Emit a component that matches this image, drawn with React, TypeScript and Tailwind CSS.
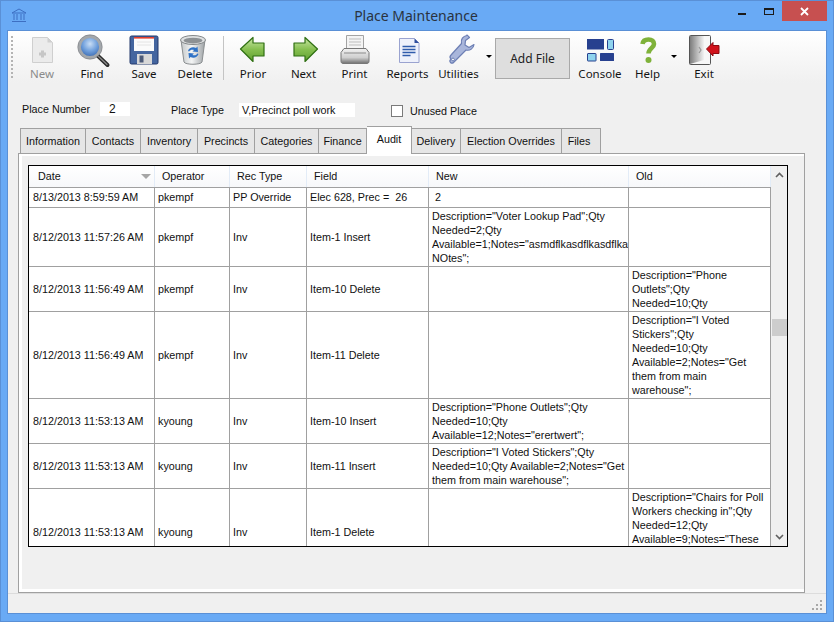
import type { ReactNode } from "react";

const uiFont = { fontFamily: '"Liberation Sans", Arial, sans-serif' };
const barFont = { fontFamily: '"Noto Sans", "Open Sans", sans-serif' };

// icons are all on a 32x32 box, drawn to sit where the toolbar puts them
function Ico({ children }: { children: ReactNode }) {
  return (
    <svg width="32" height="32" viewBox="0 0 32 32" className="overflow-visible shrink-0">
      {children}
    </svg>
  );
}

function NewIcon() {
  return (
    <Ico>
      <path d="M6.500 3.500h15l5 5v20h-20z" fill="#ebebeb" stroke="#cfcfcf" />
      <path d="M21.500 3.500v5h5z" fill="#d0d0d0" />
      <path d="M13 20h7M16.500 16.500v7" stroke="#c6c6c6" strokeWidth="3" />
    </Ico>
  );
}

function FindIcon() {
  return (
    <Ico>
      <defs>
        <radialGradient id="glass" cx="50%" cy="35%" r="70%">
          <stop offset="0" stopColor="#c9def6" />
          <stop offset="0.5" stopColor="#6f9fdc" />
          <stop offset="1" stopColor="#2f5fa8" />
        </radialGradient>
      </defs>
      <path d="M21 21l10.500 10" stroke="#2b2b2b" strokeWidth="4" strokeLinecap="round" />
      <path d="M21 21l10 9.500" stroke="#8d8d8d" strokeWidth="1.200" strokeLinecap="round" />
      <circle cx="14" cy="13" r="10.500" fill="url(#glass)" stroke="#a3a7ab" strokeWidth="2.800" />
      <circle cx="14" cy="13" r="12.200" fill="none" stroke="#5c6066" strokeWidth="0.600" />
    </Ico>
  );
}

function SaveIcon() {
  return (
    <Ico>
      <rect x="2" y="2" width="28" height="28" rx="1.500" fill="#44659f" stroke="#22386b" />
      <rect x="6" y="3" width="20" height="14" fill="#fbfbfb" />
      <rect x="6" y="3" width="20" height="1.600" fill="#e2402e" />
      <path d="M9 8h14M9 11h14" stroke="#e4e4e4" />
      <rect x="9" y="20" width="15" height="10" fill="#d8d8d8" />
      <rect x="11.500" y="21.500" width="4" height="7" fill="#4c5a78" />
    </Ico>
  );
}

function DeleteIcon() {
  return (
    <Ico>
      <defs>
        <linearGradient id="bin" x1="0" x2="1" y1="0" y2="0">
          <stop offset="0" stopColor="#c4c8ca" />
          <stop offset="0.45" stopColor="#f4f5f5" />
          <stop offset="1" stopColor="#9da2a5" />
        </linearGradient>
      </defs>
      <path d="M2 6l3 22c1 3 17 3 18 0l3-22z" fill="url(#bin)" stroke="#8a8e90" />
      <ellipse cx="14" cy="6" rx="12.500" ry="4.500" fill="#dfe1e2" stroke="#84888a" />
      <ellipse cx="14" cy="6.600" rx="9.500" ry="2.800" fill="#8d9194" />
      <path d="M9 17c1-3.500 5-4.500 8-3l1.500-1.500.5 5.500-5.500-.5 1.600-1.500c-2-.8-4-.3-5 1.500z" fill="#2f72c6" />
      <path d="M19.500 20c-1 3.500-5 4.500-8 3L10 24.500 9.500 19l5.500.5-1.600 1.500c2 .8 4 .3 5-1.500z" fill="#2f72c6" />
    </Ico>
  );
}

function ArrowIcon({ id, flip }: { id: string; flip?: boolean }) {
  return (
    <Ico>
      <defs>
        <linearGradient id={id} x1="0" x2="0" y1="0" y2="1">
          <stop offset="0" stopColor="#c9e6a6" />
          <stop offset="0.5" stopColor="#86bf50" />
          <stop offset="1" stopColor="#5fa030" />
        </linearGradient>
      </defs>
      <g transform={flip ? "translate(33 0) scale(-1 1)" : undefined}>
        <path
          d="M3.500 15L16 3.500v5.500h11v13H16v5.500z"
          fill={`url(#${id})`}
          stroke="#2f6f12"
          strokeWidth="1.200"
          strokeLinejoin="round"
        />
      </g>
    </Ico>
  );
}

function PrintIcon() {
  return (
    <Ico>
      <defs>
        <linearGradient id="printer" x1="0" x2="0" y1="0" y2="1">
          <stop offset="0" stopColor="#f2f2f2" />
          <stop offset="0.6" stopColor="#cfcfcf" />
          <stop offset="1" stopColor="#6f6f6f" />
        </linearGradient>
      </defs>
      <path d="M7.500 1.500h17v13h-17z" fill="#f4f4f4" stroke="#a3a3a3" />
      <path d="M10 5h12M10 8h12M10 11h12" stroke="#bdbdbd" />
      <path d="M5 14.500h22l3 4v9c0 1-.8 2-2 2H4c-1.200 0-2-1-2-2v-9z" fill="url(#printer)" stroke="#777" />
      <path d="M5 19h22" stroke="#8a8a8a" />
    </Ico>
  );
}

function ReportsIcon() {
  return (
    <Ico>
      <path d="M7.500 4.500h15l4.500 4.500v19.500H7.500z" fill="#eef1fb" stroke="#9aa3d0" />
      <path d="M22.500 4.500l4.500 4.500h-4.500z" fill="#2f4f9f" />
      <path d="M10.500 12.500h13M10.500 15.500h13M10.500 18.500h13M10.500 21.500h8" stroke="#2f5bab" strokeWidth="1.400" />
    </Ico>
  );
}

function UtilitiesIcon() {
  return (
    <Ico>
      <path
        d="M24 1.500c-4 .5-6.500 4-5.500 8L8 21c-2 2-1 3 0 4-1 1-2 2-.5 3.500S10 29 11 28l12-12c4 1 7.500-1.500 8-5.500l-5 3-4-2.500.5-4.500 4-3c-.8-.8-1.500-2-2.500-2.500z"
        fill="#a9b6db"
        stroke="#6d7fb4"
        strokeWidth="1.200"
        strokeLinejoin="round"
      />
      <circle cx="10" cy="25.500" r="1.400" fill="#fff" stroke="#6d7fb4" />
    </Ico>
  );
}

function ConsoleIcon() {
  return (
    <Ico>
      <rect x="3" y="5" width="17" height="10.500" fill="#27408f" />
      <rect x="23.500" y="5.500" width="6" height="10" rx="1" fill="#8fd3ee" stroke="#27408f" />
      <rect x="3.500" y="19.500" width="8.500" height="7.500" rx="0.500" fill="#8fd3ee" stroke="#27408f" />
      <rect x="16" y="19" width="14" height="8" rx="0.500" fill="#27408f" />
    </Ico>
  );
}

function HelpIcon() {
  return (
    <Ico>
      <path
        d="M10.500 10c.5-3.500 3-4.500 6-4.500 3.500 0 5.500 2 5.500 4.500 0 4-5.500 4.500-5.500 9.500"
        fill="none"
        stroke="#7fb23a"
        strokeWidth="4.600"
      />
      <circle cx="16.500" cy="26" r="3" fill="#7fb23a" />
    </Ico>
  );
}

function ExitIcon() {
  return (
    <Ico>
      <defs>
        <linearGradient id="door" x1="0" x2="1" y1="0" y2="0">
          <stop offset="0" stopColor="#7d7d7d" />
          <stop offset="0.6" stopColor="#c4c4c4" />
          <stop offset="1" stopColor="#f2f2f2" />
        </linearGradient>
      </defs>
      <rect x="1.500" y="1.500" width="21" height="29" rx="1" fill="#f7f7f7" stroke="#555" />
      <path d="M2 2h14l0 24-14 4z" fill="url(#door)" />
      <path d="M11 13l2 3-2 3" fill="none" stroke="#9a9a9a" strokeWidth="1.200" />
      <path d="M18.500 15L25 8.500v3h6v8h-6v2.500z" fill="#d0121b" stroke="#8c0a10" strokeLinejoin="round" />
    </Ico>
  );
}

function ToolItem({
  width,
  label,
  icon,
  muted,
}: {
  width: string;
  label: string;
  icon: ReactNode;
  muted?: boolean;
}) {
  return (
    <div className={`${width} flex flex-col items-center pt-[3px] shrink-0`}>
      {icon}
      <span
        className={`mt-[1px] text-[11.500px] leading-[14px] whitespace-nowrap ${muted ? "text-[#8b8b8b]" : "text-[#141414]"}`}
        style={barFont}
      >
        {label}
      </span>
    </div>
  );
}

function DropArrow() {
  return (
    <div className="flex-1 flex justify-center pt-[24px]">
      <div className="w-0 h-0 border-l-[3px] border-r-[3px] border-t-[3px] border-l-transparent border-r-transparent border-t-black" />
    </div>
  );
}

const tabs = [
  { label: "Information", w: "w-[66px] border-l" },
  { label: "Contacts", w: "w-[55px]" },
  { label: "Inventory", w: "w-[57px]" },
  { label: "Precincts", w: "w-[57px]" },
  { label: "Categories", w: "w-[64px]" },
  { label: "Finance", w: "w-[48px]" },
  { label: "Audit", w: "w-[45px]", active: true },
  { label: "Delivery", w: "w-[49px]" },
  { label: "Election Overrides", w: "w-[101px]" },
  { label: "Files", w: "w-[39px] pr-[4px]" },
];

const rows = [
  {
    h: "h-[20px]",
    date: "8/13/2013 8:59:59 AM",
    op: "pkempf",
    type: "PP Override",
    field: "Elec 628, Prec =  26",
    next: " 2",
    old: "",
  },
  {
    h: "h-[59px]",
    date: "8/12/2013 11:57:26 AM",
    op: "pkempf",
    type: "Inv",
    field: "Item-1 Insert",
    next: 'Description="Voter Lookup Pad";Qty\nNeeded=2;Qty\nAvailable=1;Notes="asmdflkasdflkasdflkasdf\nNOtes";',
    old: "",
  },
  {
    h: "h-[45px]",
    date: "8/12/2013 11:56:49 AM",
    op: "pkempf",
    type: "Inv",
    field: "Item-10 Delete",
    next: "",
    old: 'Description="Phone\nOutlets";Qty\nNeeded=10;Qty',
  },
  {
    h: "h-[87px]",
    date: "8/12/2013 11:56:49 AM",
    op: "pkempf",
    type: "Inv",
    field: "Item-11 Delete",
    next: "",
    old: 'Description="I Voted\nStickers";Qty\nNeeded=10;Qty\nAvailable=2;Notes="Get\nthem from main\nwarehouse";',
  },
  {
    h: "h-[45px]",
    date: "8/12/2013 11:53:13 AM",
    op: "kyoung",
    type: "Inv",
    field: "Item-10 Insert",
    next: 'Description="Phone Outlets";Qty\nNeeded=10;Qty\nAvailable=12;Notes="erertwert";',
    old: "",
  },
  {
    h: "h-[45px]",
    date: "8/12/2013 11:53:13 AM",
    op: "kyoung",
    type: "Inv",
    field: "Item-11 Insert",
    next: 'Description="I Voted Stickers";Qty\nNeeded=10;Qty Available=2;Notes="Get\nthem from main warehouse";',
    old: "",
  },
  {
    h: "h-[87px]",
    date: "8/12/2013 11:53:13 AM",
    op: "kyoung",
    type: "Inv",
    field: "Item-1 Delete",
    next: "",
    old: 'Description="Chairs for Poll\nWorkers checking in";Qty\nNeeded=12;Qty\nAvailable=9;Notes="These\nare for the\nworkers";',
  },
];

const colGrid = "grid grid-cols-[126px_75px_77px_122px_200px_142px]";

function HeadCell({ label, sort }: { label: string; sort?: boolean }) {
  return (
    <div className={`h-full border-r border-[#e3ecf7] flex items-center justify-between pr-[3px] ${sort ? "pl-[9px]" : "pl-[7px]"}`}>
      <span>{label}</span>
      {sort && (
        <div className="w-0 h-0 border-l-[5px] border-r-[5px] border-t-[5px] border-l-transparent border-r-transparent border-t-[#a6a6a6]" />
      )}
    </div>
  );
}

function Cell({ text, first }: { text: string; first?: boolean }) {
  return (
    <div className={`border-r border-b border-[#a0a0a0] flex items-center whitespace-pre overflow-hidden ${first ? "pl-[4px]" : "pl-[3px]"}`}>
      {text}
    </div>
  );
}

function LongCell({ text }: { text: string }) {
  return (
    <div className="border-r border-b border-[#a0a0a0] pl-[3px] pt-[1px] leading-[14px] whitespace-pre overflow-hidden">
      {text}
    </div>
  );
}

export default function App() {
  return (
    <div
      className="w-[834px] h-[622px] bg-[#69aaf5] border border-[#5a90d6] flex flex-col overflow-hidden text-[10.750px] text-[#111]"
      style={uiFont}
    >
      {/* title bar */}
      <div className="h-[29px] flex items-start shrink-0">
        <svg width="16" height="15" viewBox="0 0 16 15" className="ml-[10px] mt-[7px]">
          <path d="M1 5L8 1l7 4z" fill="none" stroke="#3d6fc2" />
          <path d="M3 6v6M6 6v6M10 6v6M13 6v6" stroke="#3d6fc2" />
          <path d="M1 13.500h14" stroke="#3d6fc2" />
        </svg>
        <div className="flex-1 text-center text-[14px] leading-[20px] mt-[5px] text-[#2a3340] pl-[67px]" style={barFont}>
          Place Maintenance
        </div>
        <div className="w-[8px] h-[2px] bg-[#1b1b1b] mt-[12px] mr-[18px]" />
        <div className="w-[10px] h-[7px] border border-[#1b1b1b] border-t-2 mt-[7px] mr-[8px]" />
        <div className="w-[45px] h-[20px] bg-[#c75050] mr-[6px] flex items-center justify-center">
          <svg width="9" height="9" viewBox="0 0 9 9">
            <path d="M1 1l7 7M8 1L1 8" stroke="#fff" strokeWidth="1.800" />
          </svg>
        </div>
      </div>

      {/* client area */}
      <div className="w-[820px] h-[584px] ml-[6px] border border-[#5a90d6] bg-[#f0f0f0] flex flex-col shrink-0">
        {/* toolbar */}
        <div className="h-[52px] shrink-0 flex bg-gradient-to-b from-white to-[#f0f0f0]">
          <div className="w-[9px] shrink-0 flex justify-start pt-[5px]">
            <div className="h-[42px] w-0 ml-[3px] border-l-2 border-dotted border-[#b4b4b4]" />
          </div>
          <ToolItem width="w-[50px]" label="New" icon={<NewIcon />} muted />
          <ToolItem width="w-[50px]" label="Find" icon={<FindIcon />} />
          <ToolItem width="w-[54px]" label="Save" icon={<SaveIcon />} />
          <ToolItem width="w-[48px]" label="Delete" icon={<DeleteIcon />} />
          <div className="w-[9px] shrink-0 flex justify-center pt-[5px]">
            <div className="w-px h-[44px] bg-[#c4c4c4]" />
          </div>
          <ToolItem width="w-[50px]" label="Prior" icon={<ArrowIcon id="prior" />} />
          <ToolItem width="w-[51px]" label="Next" icon={<ArrowIcon id="next" flip />} />
          <ToolItem width="w-[51px]" label="Print" icon={<PrintIcon />} />
          <ToolItem width="w-[55px]" label="Reports" icon={<ReportsIcon />} />
          <ToolItem width="w-[47px]" label="Utilities" icon={<UtilitiesIcon />} />
          <div className="w-[13px] shrink-0 flex">
            <DropArrow />
          </div>
          <div className="mt-[7px] w-[75px] h-[41px] shrink-0 bg-[#dedede] border border-[#a9a9a9] flex items-center justify-center">
            <span className="text-[12px] text-[#222]" style={barFont}>
              Add File
            </span>
          </div>
          <ToolItem width="w-[60px]" label="Console" icon={<ConsoleIcon />} />
          <ToolItem width="w-[35px]" label="Help" icon={<HelpIcon />} />
          <div className="w-[17px] shrink-0 flex">
            <DropArrow />
          </div>
          <ToolItem width="w-[44px]" label="Exit" icon={<ExitIcon />} />
        </div>

        {/* place fields */}
        <div className="h-[43px] shrink-0 flex items-start">
          <div className="ml-[14px] w-[78px] mt-[19px] leading-[14px]">Place Number</div>
          <div className="w-[30px] h-[14px] mt-[19px] bg-white pl-[9px] leading-[14px] text-[12px]">2</div>
          <div className="ml-[41px] w-[68px] mt-[20px] leading-[14px]">Place Type</div>
          <div className="w-[116px] h-[14px] mt-[20px] bg-white pl-[3px] leading-[14px]">V,Precinct poll work</div>
          <div className="ml-[36px] w-[12px] h-[12px] mt-[22px] bg-white border border-[#7a7a7a]" />
          <div className="ml-[7px] mt-[21px] leading-[14px]">Unused Place</div>
        </div>

        {/* tabs */}
        <div className="h-[27px] shrink-0 pl-[12px] flex items-end relative z-10">
          {tabs.map((t) =>
            t.active ? (
              <div
                key={t.label}
                className={`${t.w} h-[28px] -mb-px bg-white border-t border-r border-[#a0a0a0] flex items-start justify-center pt-[5px] leading-[14px] shrink-0`}
              >
                {t.label}
              </div>
            ) : (
              <div
                key={t.label}
                className={`${t.w} h-[25px] bg-[#e6e6e6] border-t border-r border-[#a0a0a0] flex items-center justify-center shrink-0`}
              >
                {t.label}
              </div>
            ),
          )}
        </div>

        {/* tab page */}
        <div className="ml-[10px] w-[787px] h-[440px] shrink-0 border border-[#a0a0a0] bg-[#f0f0f0]">
          <div className="h-full border-l-[3px] border-t-2 border-b-[3px] border-white pl-[6px] pt-[9px]">
            <div className="w-[760px] h-[382px] border border-black bg-white flex overflow-hidden">
              <div className="w-[742px] shrink-0">
                <div className={`${colGrid} h-[22px] border-b border-[#a0a0a0] bg-gradient-to-b from-white to-[#f7f8fa]`}>
                  <HeadCell label="Date" sort />
                  <HeadCell label="Operator" />
                  <HeadCell label="Rec Type" />
                  <HeadCell label="Field" />
                  <HeadCell label="New" />
                  <HeadCell label="Old" />
                </div>
                {rows.map((r, i) => (
                  <div key={i} className={`${colGrid} ${r.h}`}>
                    <Cell text={r.date} first />
                    <Cell text={r.op} />
                    <Cell text={r.type} />
                    <Cell text={r.field} />
                    {i === 0 ? <Cell text={r.next} /> : <LongCell text={r.next} />}
                    <LongCell text={r.old} />
                  </div>
                ))}
              </div>
              {/* scrollbar */}
              <div className="flex-1 bg-[#f0f0f0] flex flex-col items-center">
                <svg width="9" height="6" viewBox="0 0 9 6" className="mt-[6px]">
                  <path d="M1 5l3.500-3.500L8 5" fill="none" stroke="#606060" strokeWidth="1.600" />
                </svg>
                <div className="w-[15px] h-[17px] bg-[#cdcdcd] mt-[141px]" />
                <svg width="9" height="6" viewBox="0 0 9 6" className="mt-[198px]">
                  <path d="M1 1l3.500 3.500L8 1" fill="none" stroke="#606060" strokeWidth="1.600" />
                </svg>
              </div>
            </div>
          </div>
        </div>

        {/* status bar */}
        <div className="flex-1 border-t border-[#dcdcdc] flex justify-end items-end pr-[3px] pb-[2px]">
          <svg width="11" height="11" viewBox="0 0 11 11">
            <g fill="#a8a8a8">
              <rect x="8" y="0" width="2" height="2" />
              <rect x="4" y="4" width="2" height="2" />
              <rect x="8" y="4" width="2" height="2" />
              <rect x="0" y="8" width="2" height="2" />
              <rect x="4" y="8" width="2" height="2" />
              <rect x="8" y="8" width="2" height="2" />
            </g>
          </svg>
        </div>
      </div>
    </div>
  );
}
